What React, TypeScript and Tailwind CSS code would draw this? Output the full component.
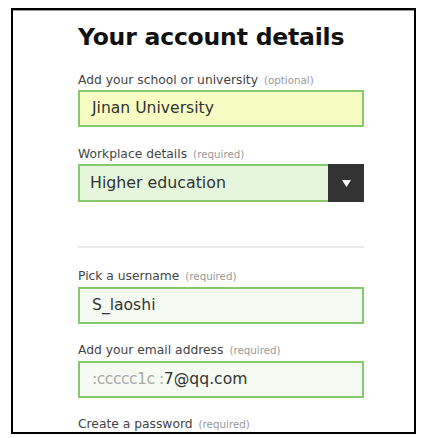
import React from "react";

const font = { fontFamily: '"DejaVu Sans", "Noto Sans", sans-serif' };

function Label({ main, sub, className = "" }: { main: string; sub: string; className?: string }) {
  return (
    <div className={"h-[16px] leading-[16px] whitespace-nowrap " + className}>
      <span className="text-[12.3px] text-[#444]">{main}</span>
      <span className="text-[10.3px] text-[#999] ml-[6px]">{sub}</span>
    </div>
  );
}

export default function App() {
  return (
    <div className="w-[424px] h-[438px] bg-white overflow-hidden" style={font}>
      <div className="ml-[11px] mt-[8px] w-[405px] h-[426px] border-2 border-black bg-white">
        <div className="border-t border-[#9a9a9a] h-full pl-[65px] pr-[50px]">
          <h1 className="mt-[10px] text-[23.5px] leading-[32px] font-bold text-[#111] whitespace-nowrap tracking-[-0.2px]">
            Your account details
          </h1>

          <Label className="mt-[18px]" main="Add your school or university" sub="(optional)" />
          <div className="mt-[3px] h-[37px] border-2 border-[#86c96c] bg-[#f6fcc2] flex items-center pl-[12px] text-[15.6px] text-[#333]">
            Jinan University
          </div>

          <Label className="mt-[18px]" main="Workplace details" sub="(required)" />
          <div className="mt-[3px] h-[38px] flex">
            <div className="flex-1 border-2 border-r-0 border-[#86c96c] bg-[#e5f6dc] flex items-center pl-[10px] text-[15.8px] text-[#333]">
              Higher education
            </div>
            <div className="w-[36px] bg-[#333333] flex items-center justify-center">
              <svg width="9" height="7" viewBox="0 0 9 7">
                <path d="M0 0 H9 L4.5 7 Z" fill="#fff" />
              </svg>
            </div>
          </div>

          <div className="mt-[44px] h-[2px] bg-[#ebebeb]" />

          <Label className="mt-[19px]" main="Pick a username" sub="(required)" />
          <div className="mt-[4px] h-[37px] border-2 border-[#86c96c] bg-[#f5fbf2] flex items-center pl-[12px] text-[15.6px] text-[#333]">
            S_laoshi
          </div>

          <Label className="mt-[17px]" main="Add your email address" sub="(required)" />
          <div className="mt-[4px] h-[37px] border-2 border-[#86c96c] bg-[#f5fbf2] flex items-center pl-[12px] text-[15.6px] text-[#333]">
            <span className="text-[#aaa] tracking-[-0.5px]">:ccccc1c :</span>
            <span>7@qq.com</span>
          </div>

          <Label className="mt-[17px]" main="Create a password" sub="(required)" />
        </div>
      </div>
    </div>
  );
}
